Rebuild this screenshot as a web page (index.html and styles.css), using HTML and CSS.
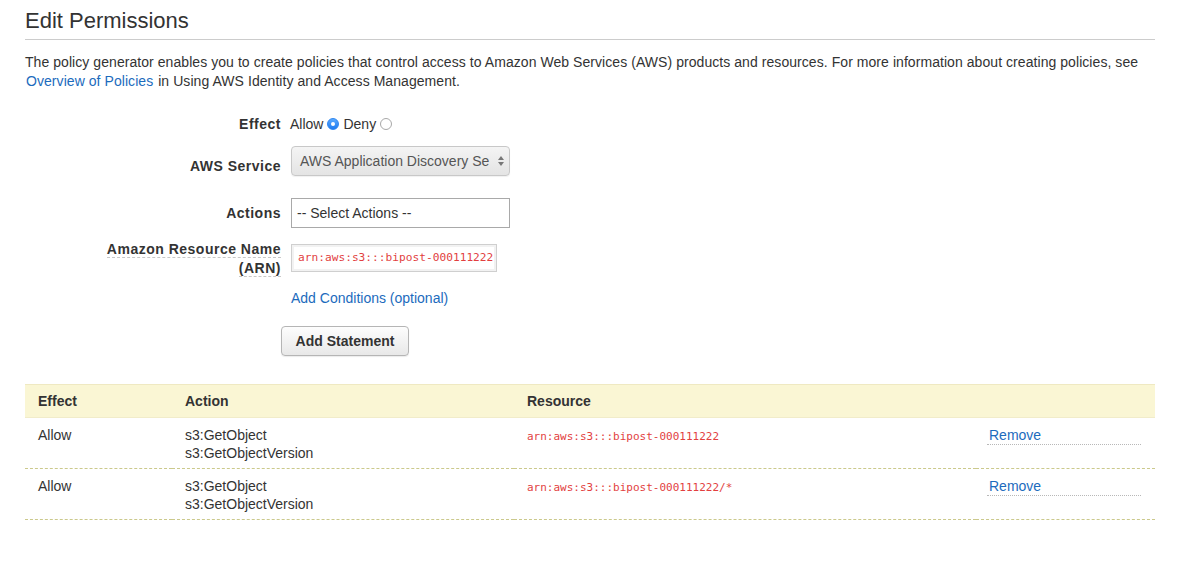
FILE: index.html
```html
<!DOCTYPE html>
<html>
<head>
<meta charset="utf-8">
<title>Edit Permissions</title>
<link rel="stylesheet" href="styles.css">
</head>
<body>
<div class="page">
  <h1 class="title">Edit Permissions</h1>
  <p class="intro">The policy generator enables you to create policies that control access to Amazon Web Services (AWS) products and resources. For more information about creating policies, see <a class="link" href="#">Overview of Policies</a> in Using AWS Identity and Access Management.</p>

  <div class="form">
    <div class="row row-effect">
      <div class="lbl">Effect</div>
      <div class="ctl radios">
        <span>Allow</span><span class="radio on"></span>
        <span>Deny</span><span class="radio"></span>
      </div>
    </div>

    <div class="row row-service">
      <div class="lbl lbl-service">AWS Service</div>
      <div class="ctl">
        <div class="select">
          <span class="select-text">AWS Application Discovery Se</span>
          <svg class="arrows" width="8" height="12" viewBox="0 0 8 12"><path d="M4 1 L7 5 H1 Z M4 11 L7 7 H1 Z" fill="#777"/></svg>
        </div>
      </div>
    </div>

    <div class="row row-actions">
      <div class="lbl lbl-actions">Actions</div>
      <div class="ctl"><div class="input">-- Select Actions --</div></div>
    </div>

    <div class="row row-arn">
      <div class="lbl lbl-arn"><span class="abbr">Amazon Resource Name<br>(ARN)</span></div>
      <div class="ctl"><div class="arn-input">arn:aws:s3:::bipost-000111222</div></div>
    </div>

    <div class="row row-cond">
      <div class="lbl"></div>
      <div class="ctl"><a class="link" href="#">Add Conditions (optional)</a></div>
    </div>

    <div class="row-btn">
      <button class="btn">Add Statement</button>
    </div>
  </div>

  <table class="stmts">
    <thead>
      <tr><th class="c-effect">Effect</th><th class="c-action">Action</th><th class="c-res">Resource</th><th class="c-rm"></th></tr>
    </thead>
    <tbody>
      <tr>
        <td class="c-effect">Allow</td>
        <td class="c-action">s3:GetObject<br>s3:GetObjectVersion</td>
        <td class="c-res"><span class="code">arn:aws:s3:::bipost-000111222</span></td>
        <td class="c-rm"><a class="remove" href="#">Remove</a></td>
      </tr>
      <tr>
        <td class="c-effect">Allow</td>
        <td class="c-action">s3:GetObject<br>s3:GetObjectVersion</td>
        <td class="c-res"><span class="code">arn:aws:s3:::bipost-000111222/*</span></td>
        <td class="c-rm"><a class="remove" href="#">Remove</a></td>
      </tr>
    </tbody>
  </table>
</div>
</body>
</html>
```

FILE: styles.css
```css
* { box-sizing: border-box; }
html, body { margin: 0; padding: 0; background: #fff; }
body {
  font-family: "Liberation Sans", Arial, Helvetica, sans-serif;
  font-size: 14px;
  color: #333;
}
.page {
  width: 1130px;
  margin-left: 25px;
}
.title {
  margin: 0;
  padding-top: 8px;
  padding-bottom: 5px;
  font-size: 22px;
  line-height: 26px;
  font-weight: normal;
  color: #333;
  border-bottom: 1px solid #ccc;
}
.intro {
  margin: 13px 0 0 0;
  line-height: 19px;
  letter-spacing: 0.06px;
}
.link {
  color: #1c6bbd;
  text-decoration: none;
  padding: 0 1px;
}
.form {
  margin-top: 23px;
}
.row {
  display: grid;
  grid-template-columns: 256px 1fr;
  column-gap: 9px;
}
.lbl {
  text-align: right;
  font-weight: bold;
  line-height: 20px;
  letter-spacing: 0.5px;
}
.ctl { line-height: 20px; }
.radios {
  display: flex;
  align-items: center;
}
.radio {
  display: inline-block;
  width: 12px;
  height: 12px;
  border-radius: 50%;
  border: 1px solid #a8a8a8;
  background: #fff;
  margin: 0 4px 0 4px;
  position: relative;
}
.radio.on {
  border-color: #2e86f0;
  background: linear-gradient(#5aa9ff, #1f7bf0);
}
.radio.on::after {
  content: "";
  position: absolute;
  left: 3px;
  top: 3px;
  width: 4px;
  height: 4px;
  border-radius: 50%;
  background: #fff;
}
.row-service { margin-top: 12px; }
.lbl-service { padding-top: 10px; }
.select {
  width: 219px;
  height: 30px;
  margin-left: 1px;
  border: 1px solid #c8c8c8;
  border-radius: 4px;
  background: linear-gradient(#f4f4f4, #e4e4e4);
  display: flex;
  align-items: center;
  padding: 0 10px 0 8px;
  color: #555;
  box-shadow: 0 1px 1px rgba(0,0,0,0.06);
}
.select-text {
  flex: 1;
  white-space: nowrap;
  margin-right: 8px;
}
.arrows { flex: none; }
.row-actions { margin-top: 22px; }
.lbl-actions { line-height: 30px; }
.input {
  width: 219px;
  height: 30px;
  margin-left: 1px;
  border: 1px solid #a9a9a9;
  background: #fff;
  padding: 0 5px;
  line-height: 28px;
  color: #333;
}
.row-arn { margin-top: 12px; }
.lbl-arn { line-height: 19px; }
.abbr {
  border-bottom: 1px dashed #c8c8c8;
}
.arn-input {
  margin-top: 4px;
  margin-left: 1px;
  width: 206px;
  height: 28px;
  border: 1px solid #cfcfcf;
  box-shadow: inset 0 0 0 2px #f2f2f2;
  background: #fff;
  padding: 0 0 0 6px;
  font-family: "DejaVu Sans Mono", "Liberation Mono", monospace;
  font-size: 11.2px;
  line-height: 26px;
  color: #e23f3f;
  white-space: nowrap;
}
.row-cond { margin-top: 10px; }
.row-btn {
  margin-top: 18px;
  padding-left: 256px;
}
.btn {
  width: 128px;
  height: 30px;
  border: 1px solid #b5b5b5;
  border-radius: 4px;
  background: linear-gradient(#fdfdfd, #e8e8e8);
  font-family: "Liberation Sans", Arial, Helvetica, sans-serif;
  font-size: 14px;
  font-weight: bold;
  color: #333;
  padding: 0;
  box-shadow: 0 1px 1px rgba(0,0,0,0.08);
}
.stmts {
  margin-top: 28px;
  width: 1130px;
  border-collapse: collapse;
  table-layout: fixed;
}
.stmts th {
  background: #faf6d4;
  border-top: 1px solid #efe9c2;
  border-bottom: 1px solid #f1ecca;
  height: 33px;
  text-align: left;
  font-weight: bold;
  padding: 0 0 0 13px;
  vertical-align: middle;
}
.stmts td {
  vertical-align: top;
  padding: 8px 0 6px 13px;
  line-height: 18px;
  border-bottom: 1px dashed #cbc98c;
}
.stmts .c-effect { width: 147px; }
.stmts .c-action { width: 342px; }
.stmts .c-res { width: 462px; }
.stmts td.c-rm { padding-left: 11px; padding-right: 14px; }
.code {
  font-family: "DejaVu Sans Mono", "Liberation Mono", monospace;
  font-size: 11px;
  color: #e23f3f;
}
.remove {
  display: block;
  padding-left: 2px;
  color: #1c6bbd;
  text-decoration: none;
  border-bottom: 1px dotted #b8b8b8;
}
```
